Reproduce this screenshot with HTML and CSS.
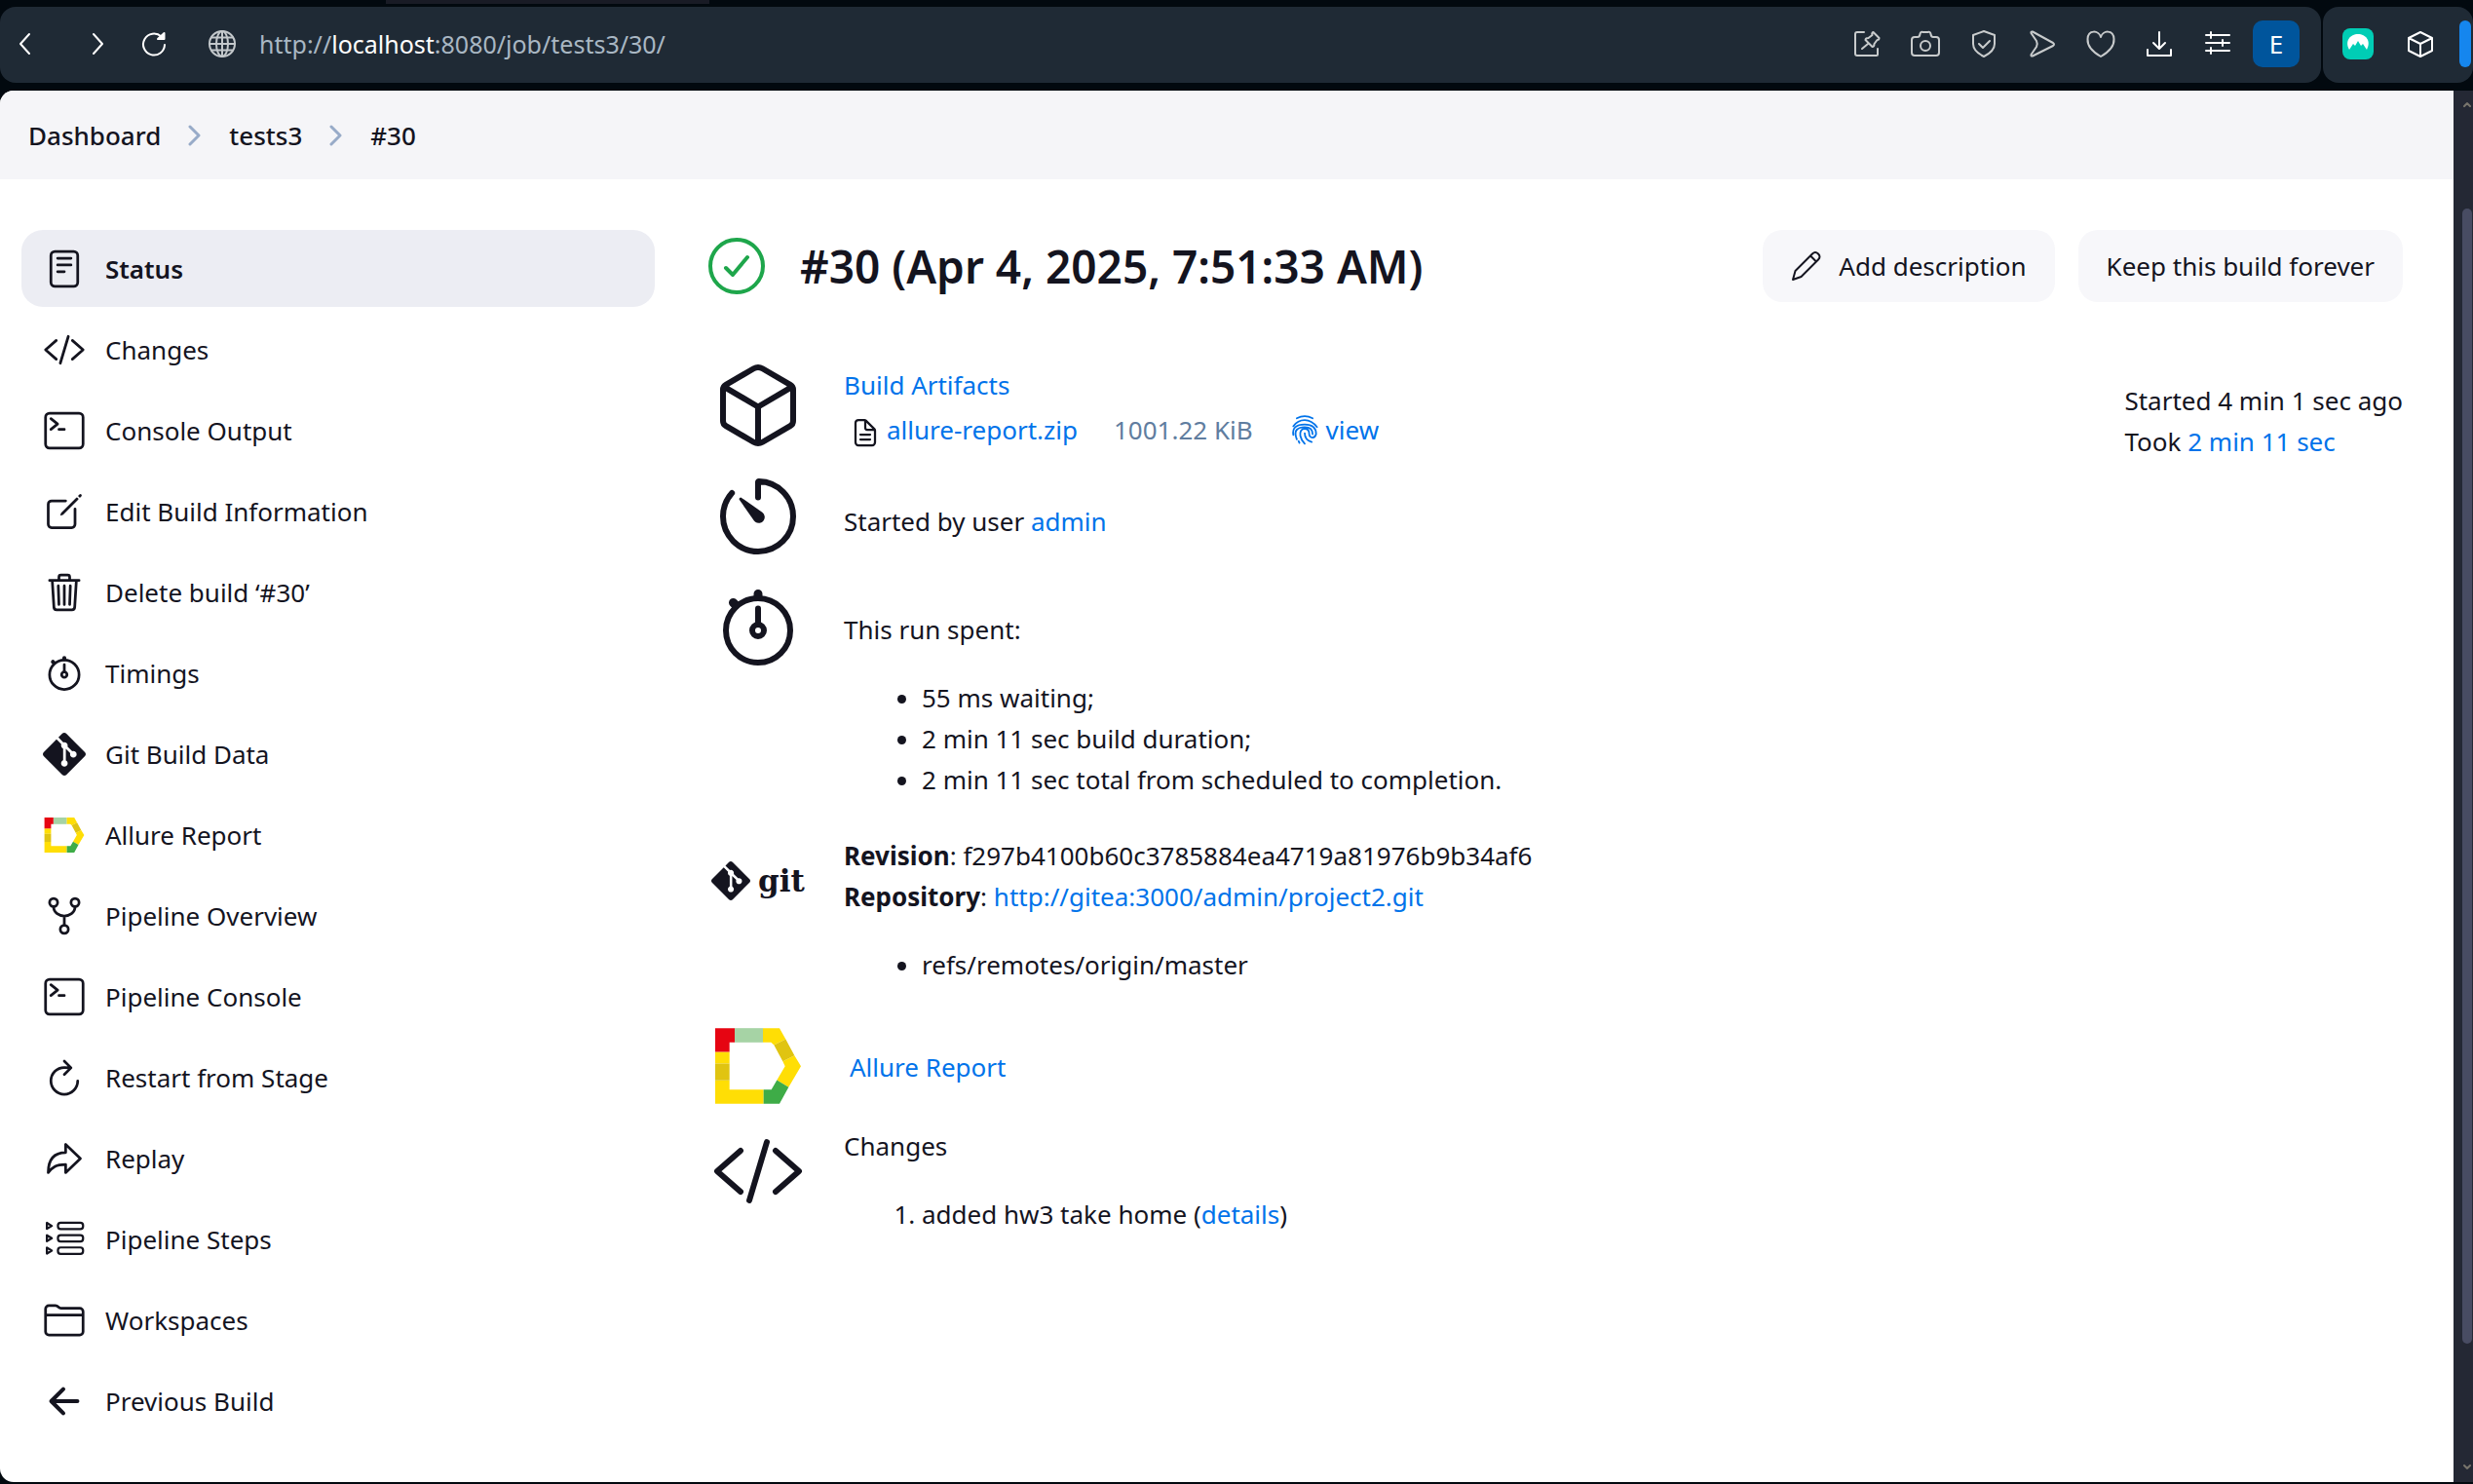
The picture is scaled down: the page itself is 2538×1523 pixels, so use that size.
FILE: index.html
```html
<!DOCTYPE html>
<html lang="en">
<head>
<meta charset="utf-8">
<title>tests3 #30 [Jenkins]</title>
<link rel="stylesheet" href="styles.css">
</head>
<body>
<svg class="sprite" aria-hidden="true">
  <symbol id="code" viewBox="0 0 512 512"><path d="M160 368L32 256l128-112M352 368l128-112-128-112M304 96l-96 320"/></symbol>
  <symbol id="terminal" viewBox="0 0 512 512"><rect x="32" y="48" width="448" height="416" rx="48"/><path d="M96 112l80 64-80 64M192 240h64"/></symbol>
  <symbol id="stopwatch" viewBox="0 0 512 512"><path d="M256 232v-80"/><path stroke-width="48" d="M256 88V72M132 132l-12-12"/><circle cx="256" cy="272" r="32"/><circle cx="256" cy="272" r="176"/></symbol>
  <symbol id="gitmark" viewBox="0 0 24 24"><path fill="currentColor" stroke="none" d="M23.546 10.93L13.067.452c-.604-.603-1.582-.603-2.188 0L8.708 2.627l2.76 2.76c.645-.215 1.379-.07 1.889.441.516.515.658 1.258.438 1.9l2.658 2.66c.645-.223 1.387-.078 1.9.435.721.72.721 1.884 0 2.604-.719.719-1.881.719-2.6 0-.539-.541-.674-1.337-.404-1.996L12.86 8.955v6.525c.176.086.342.203.488.348.713.721.713 1.883 0 2.6-.719.721-1.889.721-2.609 0-.719-.719-.719-1.879 0-2.598.182-.18.387-.316.605-.406V8.835c-.217-.091-.424-.222-.6-.401-.545-.545-.676-1.342-.396-2.009L7.636 3.7.45 10.881c-.6.605-.6 1.584 0 2.189l10.48 10.477c.604.604 1.582.604 2.186 0l10.43-10.43c.605-.603.605-1.582 0-2.187"/></symbol>
  <symbol id="allure" viewBox="0 0 264 233"><g stroke="none"><path fill="#ffde05" d="M0 73h44v36H0zM0 161h44v28h105v44H0zM147 0h51l19 34-36 18-9-8h-25zM244 84l20 33-38 65-36-22 25-43-7-15z"/><path fill="#e60512" d="M0 0h60v44H44v29H0z"/><path fill="#a6d3a5" d="M60 0h87v44H60z"/><path fill="#e0c411" d="M0 109h44v52H0zM217 34l27 50-36 18-27-50z"/><path fill="#3eac47" d="M226 182l-28 51h-49v-44h24l17-29z"/></g></symbol>
</svg>

<header class="browser">
  <div class="tabstrip"><span class="tab"></span></div>
  <div class="toolbars">
    <div class="toolbar">
      <nav class="history" aria-label="History">
        <button aria-label="Back"><svg viewBox="0 0 32 32"><path d="M20 6l-9 10 9 10"/></svg></button>
        <button class="forward" aria-label="Forward"><svg viewBox="0 0 32 32"><path d="M12 6l9 10-9 10"/></svg></button>
        <button class="reload" aria-label="Reload"><svg viewBox="0 0 32 32"><path d="M27 17a11 11 0 1 1-3.500-8.500"/><path fill="currentColor" d="M20 11h6.500V5z"/></svg></button>
        <svg class="globe" viewBox="0 0 32 32"><circle cx="16" cy="16" r="13"/><ellipse cx="16" cy="16" rx="6" ry="13"/><path d="M3 16h26M16 3v26M5 9.500h22M5 22.500h22"/></svg>
      </nav>
      <div class="url">http://<b>localhost</b>:8080/job/tests3/30/</div>
      <div class="actions">
        <button class="dim" aria-label="Pinboard"><svg viewBox="0 0 32 32"><path d="M13 4H6a2 2 0 0 0-2 2v20a2 2 0 0 0 2 2h20a1 1 0 0 0 1-1v-6M22.500 4l6 6q0 2-2 2l-3 4q0 3-2 3l-7-7q0-2 3-2l4-3q-1-2 1-3zM17 16l-6 5"/></svg></button>
        <button class="dim" aria-label="Snapshot"><svg viewBox="0 0 32 32"><path d="M5 9h3q2 0 2.500-3t3-2h5q2.500-1 3 2t2.500 3h3a3 3 0 0 1 3 3v13a3 3 0 0 1-3 3H5a3 3 0 0 1-3-3V12a3 3 0 0 1 3-3z"/><circle cx="16" cy="18" r="5"/></svg></button>
        <button class="dim" aria-label="Ad blocker"><svg viewBox="0 0 32 32"><path d="M16 3l11 4v9c0 6-5 10-11 13C10 26 5 22 5 16V7zM11 16l4 4 7-7"/></svg></button>
        <button class="dim" aria-label="My Flow"><svg viewBox="0 0 32 32"><path d="M6 3.500L27 15q2 1.500 0 3L6 28.500q-2 .5-1.500-1.500L10 19q1.500-3 0-6L4.500 5Q4 3 6 3.500z"/></svg></button>
        <button class="dim" aria-label="Bookmarks"><svg viewBox="0 0 32 32"><path d="M16 9C14 2 3 1 2.500 11 2 19 9 25 16 29 23 25 30 19 29.500 11 29 1 18 2 16 9z"/></svg></button>
        <button aria-label="Downloads"><svg viewBox="0 0 32 32"><path d="M16 4v16M10 15l6 6 6-6M4 22v6h24v-6"/></svg></button>
        <button aria-label="Easy setup"><svg viewBox="0 0 32 32"><path d="M4 7h24M4 15h24M4 23h24M9 4v6M21 12v6M9 20v6"/></svg></button>
        <button class="profile">E</button>
      </div>
    </div>
    <div class="extensions">
      <button class="vpn" aria-label="VPN"><svg viewBox="0 0 32 32"><path fill="#fff" stroke="none" d="M7 22C2 13 8 6 16 6s14 7 9 16l-4-6-2 2-3-5-3 5-2-2z"/></svg></button>
      <button aria-label="Extensions"><svg viewBox="0 0 32 32"><path d="M16 4l12 6v13l-12 6-12-6V10zM4 10l12 6 12-6M16 16v13"/></svg></button>
      <span class="sidepanel"></span>
    </div>
  </div>
</header>

<div class="viewport">
  <div class="page">
    <nav class="breadcrumbs" aria-label="Breadcrumbs">
      <a href="#">Dashboard</a>
      <svg viewBox="0 0 14 22"><path d="M2 2l9 9-9 9"/></svg>
      <a href="#">tests3</a>
      <svg viewBox="0 0 14 22"><path d="M2 2l9 9-9 9"/></svg>
      <a href="#">#30</a>
    </nav>

    <div class="columns">
      <nav class="tasks" aria-label="Build">
        <a class="task active" href="#"><svg viewBox="0 0 512 512"><rect x="96" y="48" width="320" height="416" rx="48"/><path d="M176 128h160M176 208h160M176 288h80"/></svg>Status</a>
        <a class="task" href="#"><svg><use href="#code"/></svg>Changes</a>
        <a class="task" href="#"><svg><use href="#terminal"/></svg>Console Output</a>
        <a class="task" href="#"><svg viewBox="0 0 512 512"><path d="M384 224v184a40 40 0 01-40 40H104a40 40 0 01-40-40V168a40 40 0 0140-40h167.480"/><path fill="currentColor" stroke="none" d="M459.940 53.250a16.060 16.060 0 00-23.220-.56L424.350 65a8 8 0 000 11.310l11.340 11.320a8 8 0 0011.340 0l12.060-12c6.100-6.090 6.670-16.010.85-22.380zM399.340 90L218.820 270.200a9 9 0 00-2.310 3.930L208.160 299a3.910 3.910 0 004.860 4.860l24.850-8.350a9 9 0 003.930-2.310L422 112.660a9 9 0 000-12.660l-9.950-10a9 9 0 00-12.710 0z"/></svg>Edit Build Information</a>
        <a class="task" href="#"><svg viewBox="0 0 512 512"><path d="M112 112l20 320c.95 18.490 14.400 32 32 32h184c17.670 0 30.870-13.510 32-32l20-320M80 112h352M192 112V72a24 24 0 0124-24h80a24 24 0 0124 24v40M256 176v224M184 176l8 224M328 176l-8 224"/></svg>Delete build ‘#30’</a>
        <a class="task" href="#"><svg><use href="#stopwatch"/></svg>Timings</a>
        <a class="task" href="#"><svg><use href="#gitmark"/></svg>Git Build Data</a>
        <a class="task" href="#"><svg class="allure"><use href="#allure"/></svg>Allure Report</a>
        <a class="task" href="#"><svg viewBox="0 0 512 512"><circle cx="128" cy="96" r="48"/><circle cx="384" cy="96" r="48"/><circle cx="256" cy="416" r="48"/><path d="M256 256v112M128 144c0 74.670 68.920 112 128 112M384 144c0 74.670-68.920 112-128 112"/></svg>Pipeline Overview</a>
        <a class="task" href="#"><svg><use href="#terminal"/></svg>Pipeline Console</a>
        <a class="task" href="#"><svg viewBox="0 0 512 512"><path d="M330 138s-14-4-74-4a160 160 0 10160 160M256 58l80 80-80 80"/></svg>Restart from Stage</a>
        <a class="task" href="#"><svg viewBox="0 0 512 512"><path d="M448 256L272 88v96C103.570 184 64 304.770 64 424c48.610-62.240 91.600-96 208-96v96z"/></svg>Replay</a>
        <a class="task" href="#"><svg viewBox="0 0 512 512"><g stroke-width="26"><rect x="180" y="56" width="300" height="76" rx="32"/><rect x="180" y="204" width="300" height="76" rx="32"/><rect x="180" y="352" width="300" height="76" rx="32"/><path d="M48 58v72l58-36zM48 206v72l58-36zM48 354v72l58-36z"/></g></svg>Pipeline Steps</a>
        <a class="task" href="#"><svg viewBox="0 0 512 512"><path d="M440 432H72a40 40 0 01-40-40V120a40 40 0 0140-40h75.890a40 40 0 0122.190 6.720l27.840 18.560a40 40 0 0022.190 6.720H440a40 40 0 0140 40v240a40 40 0 01-40 40zM32 192h448"/></svg>Workspaces</a>
        <a class="task" href="#"><svg viewBox="0 0 512 512"><path stroke-width="48" d="M244 400L100 256l144-144M120 256h292"/></svg>Previous Build</a>
      </nav>

      <main class="main">
        <div class="titlebar">
          <svg class="result" viewBox="0 0 58 58"><circle cx="29" cy="29" r="27"/><path d="M18 31l7 7 15-18"/></svg>
          <h1>#30 (Apr 4, 2025, 7:51:33 AM)</h1>
          <button class="button"><svg viewBox="0 0 32 32"><path d="M2 30l2.500-9L22 3.500q3-3 6 0t0 6L10.500 27zM20 5.500l6 6"/></svg>Add description</button>
          <button class="button">Keep this build forever</button>
        </div>

        <div class="body">
          <div class="summary">
            <section class="row artifacts">
              <svg class="icon" viewBox="0 0 512 512"><path d="M448 341.370V170.610A32 32 0 00432.110 143l-152-88.460a47.940 47.940 0 00-48.240 0L79.890 143A32 32 0 0064 170.610v170.760A32 32 0 0079.890 369l152 88.460a48 48 0 0048.240 0l152-88.460A32 32 0 00448 341.370zM69 153.990l187 110 187-110M256 463.990v-200"/></svg>
              <div class="text">
                <a href="#">Build Artifacts</a>
                <div class="file">
                  <svg class="doc" viewBox="0 0 512 512"><path d="M416 221.250V416a48 48 0 01-48 48H144a48 48 0 01-48-48V96a48 48 0 0148-48h98.750a32 32 0 0122.620 9.370l141.260 141.260a32 32 0 019.370 22.620zM256 56v120a32 32 0 0032 32h120M176 288h160M176 368h160"/></svg>
                  <a href="#">allure-report.zip</a>
                  <span class="size">1001.22 KiB</span>
                  <a class="view" href="#"><svg viewBox="0 0 40 40"><path d="M11 7Q20 2 29 7M7 16Q12 9 20 9t14 8M7 26Q5 14 20 14q13 0 13 11-1 4-4 4-4 0-4-5t-5-5q-6 0-5 8 1 5 5 9M11 31q-3-8 0-11 3-3 9-3 9 0 9 8M20 24q0 8 8 10M14 35l-1-2"/></svg>view</a>
                </div>
              </div>
            </section>
            <section class="row cause">
              <svg class="icon" viewBox="0 0 512 512"><path d="M112.910 128A191.850 191.850 0 0064 254c-1.180 106.350 85.650 193.800 192 194 106.200.2 192-85.830 192-192 0-104.540-83.550-189.610-187.500-192a4.360 4.360 0 00-4.500 4.370V152"/><path fill="currentColor" stroke="none" d="M233.380 278.630l-79-113a8.130 8.130 0 0111.320-11.320l113 79a32.500 32.500 0 01-37.250 53.260 33.210 33.210 0 01-8.070-7.940z"/></svg>
              <div class="text">Started by user <a href="#">admin</a></div>
            </section>
            <section class="row timing">
              <svg class="icon"><use href="#stopwatch"/></svg>
              <div class="text">This run spent:
                <ul>
                  <li>55 ms waiting;</li>
                  <li>2 min 11 sec build duration;</li>
                  <li>2 min 11 sec total from scheduled to completion.</li>
                </ul>
              </div>
            </section>
            <section class="row">
              <div class="icon gitlogo"><svg><use href="#gitmark"/></svg><span>git</span></div>
              <div class="text"><strong>Revision</strong>: f297b4100b60c3785884ea4719a81976b9b34af6<br><strong>Repository</strong>: <a href="#">http://gitea:3000/admin/project2.git</a>
                <ul>
                  <li>refs/remotes/origin/master</li>
                </ul>
              </div>
            </section>
            <section class="row report">
              <svg class="icon"><use href="#allure" x="4" y="9" width="88" height="78"/></svg>
              <div class="text"><a href="#">Allure Report</a></div>
            </section>
            <section class="row">
              <svg class="icon"><use href="#code"/></svg>
              <div class="text">Changes
                <ol>
                  <li>added hw3 take home (<a href="#">details</a>)</li>
                </ol>
              </div>
            </section>
          </div>
          <aside class="times">Started 4 min 1 sec ago<br>Took <a href="#">2 min 11 sec</a></aside>
        </div>
      </main>
    </div>
  </div>
  <div class="scrollbar">
    <svg viewBox="0 0 8 6"><path d="M1 5l3-3 3 3"/></svg>
    <span class="thumb"></span>
    <svg viewBox="0 0 8 6"><path d="M1 1l3 3 3-3"/></svg>
  </div>
</div>
</body>
</html>
```

FILE: styles.css
```css
* { box-sizing: border-box; }

body {
  margin: 0;
  min-height: 100vh;
  display: flex;
  flex-direction: column;
  background: #02090f;
  color: #14141f;
  font: 26px/42px "Noto Sans", "Open Sans", sans-serif;
}

a { color: #0073ea; text-decoration: none; }
button { font: inherit; border: 0; padding: 0; background: none; color: inherit; }

svg {
  display: block;
  flex: none;
  fill: none;
  stroke: currentColor;
  stroke-width: 32;
  stroke-linecap: round;
  stroke-linejoin: round;
}
.sprite { position: absolute; width: 0; height: 0; }

/* Browser chrome */
.tabstrip { height: 7px; padding-left: 396px; }
.tab { display: block; width: 332px; height: 4px; background: #191b25; }
.toolbars { display: flex; gap: 2px; height: 78px; color: #fff; }
.toolbars svg { width: 32px; height: 32px; stroke-width: 2; }
.toolbar {
  flex: 1;
  display: flex;
  align-items: center;
  padding: 0 22px 2px 10px;
  background: #1f2a35;
  border-radius: 16px;
}
.history { display: flex; align-items: center; }
.forward { margin-left: 42px; }
.reload { margin-left: 26px; }
.globe { margin: 0 22px 0 38px; color: #c3c8cb; }
.url { flex: 1; font-size: 25px; color: #a9b7c3; }
.url b { font-weight: 400; color: #fff; }
.actions { display: flex; align-items: center; gap: 28px; }
.dim { color: #c8cbcc; }
.profile {
  width: 48px;
  height: 48px;
  margin-left: -8px;
  border-radius: 10px;
  background: #00559c;
  line-height: 48px;
}
.extensions {
  display: flex;
  align-items: center;
  width: 154px;
  padding: 0 2px 2px 20px;
  background: #1f2a35;
  border-radius: 16px;
}
.vpn { margin-right: 32px; border-radius: 8px; background: #00cdb5; }
.sidepanel { width: 12px; height: 48px; margin-left: auto; border-radius: 6px; background: #1586ee; }

/* Page area */
.viewport { flex: 1; display: flex; padding: 8px 0 2px; }
.page { flex: 1; background: #fff; border-radius: 14px 0 0 14px; overflow: hidden; }
.scrollbar {
  width: 20px;
  display: flex;
  flex-direction: column;
  align-items: flex-end;
  padding: 11px 1px 12px 0;
  background: #242834;
}
.scrollbar svg { width: 8px; height: 6px; margin-right: 1px; color: #77746c; stroke-width: 2; }
.thumb { width: 10px; flex: 0 1 1165px; margin: 104px 0 auto; border-radius: 5px; background: #484c63; }

.breadcrumbs {
  display: flex;
  align-items: center;
  gap: 28px;
  height: 91px;
  padding: 0 29px;
  background: #f5f5f8;
}
.breadcrumbs a { color: #14141f; font-weight: 500; }
.breadcrumbs svg { width: 14px; height: 22px; stroke-width: 3; color: #98abc8; }

.columns { display: flex; gap: 53px; padding: 52px 52px 0 22px; }
.tasks { width: 650px; flex: none; display: flex; flex-direction: column; gap: 4px; }
.task {
  display: flex;
  align-items: center;
  gap: 20px;
  height: 79px;
  padding: 0 22px;
  border-radius: 22px;
  color: #14141f;
}
.task svg { width: 44px; height: 44px; }
.task .allure { height: 36px; }
.active { background: #ecedf3; font-weight: 600; }

/* Build details */
.main { flex: 1; }
.titlebar { display: flex; align-items: center; height: 74px; }
.titlebar h1 { flex: 1; margin: 0 0 0 36px; font-size: 46px; line-height: 60px; font-weight: 600; }
.result { width: 58px; height: 58px; margin-left: 2px; color: #1ea64b; stroke-width: 4; }
.button {
  display: flex;
  align-items: center;
  height: 74px;
  padding: 0 29px;
  margin-left: 24px;
  border-radius: 20px;
  background: #f7f7fa;
}
.button svg { width: 32px; height: 32px; margin-right: 17px; stroke-width: 2; }

.body { display: flex; justify-content: space-between; padding-top: 58px; }
.summary { display: flex; flex-direction: column; gap: 7px; }
.row { display: flex; gap: 40px; padding-left: 5px; }
.icon { width: 96px; height: 96px; }
.text { padding-top: 1px; }
.artifacts, .cause { min-height: 107px; }
.artifacts .text { padding-top: 6px; }
.cause .text { padding-top: 32px; }
.timing .text { padding-top: 29px; }
.report { min-height: 101px; }
.report .text { padding: 28px 0 0 6px; }
.row ul, .row ol { margin: 28px 0; padding-left: 80px; }

.file { display: flex; align-items: center; height: 50px; padding-left: 6px; }
.doc { width: 32px; height: 32px; margin: 6px 6px 0 0; stroke-width: 36px; }
.size { margin: 0 35px 0 37px; color: #607d9f; }
.view { display: flex; align-items: center; gap: 4px; }
.view svg { width: 36px; height: 36px; stroke-width: 2; }

.gitlogo { display: flex; align-items: center; gap: 8px; font: bold 31px/40px "DejaVu Serif", serif; }
.gitlogo svg { width: 40px; height: 40px; }

.times { padding-top: 22px; }
```
